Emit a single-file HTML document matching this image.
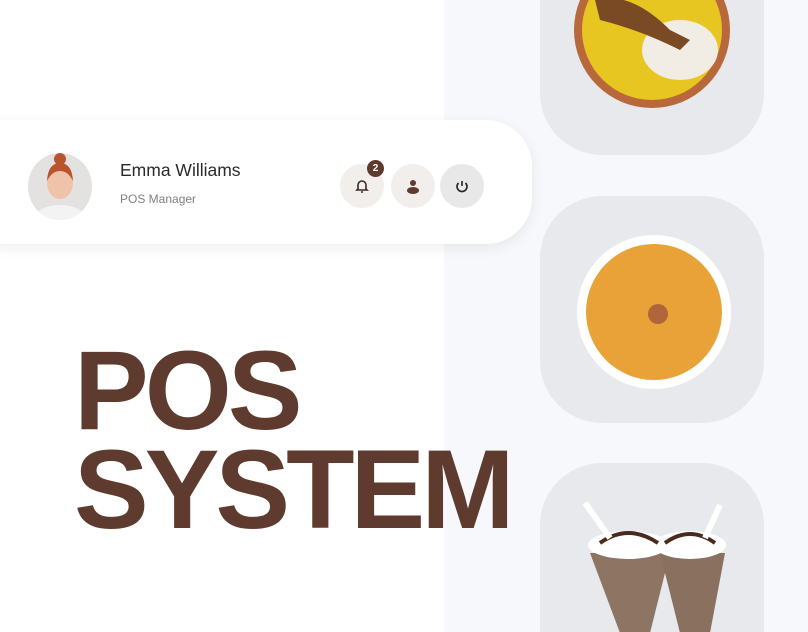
<!DOCTYPE html>
<html style="overflow:hidden;width:808px;height:632px"><head><meta charset="utf-8"><style>
*{margin:0;padding:0;box-sizing:border-box}
body{width:808px;height:632px;overflow:hidden;background:#fff;position:relative;font-family:"Liberation Sans",sans-serif}
.right{position:absolute;left:444px;top:0;width:364px;height:632px;background:#f7f8fb}
.tile{position:absolute;left:540px;width:224px;background:#e8e9ed;border-radius:62px;overflow:hidden}
.card{position:absolute;left:-40px;top:120px;width:572px;height:124px;background:#fff;border-radius:46px;box-shadow:0 4px 14px rgba(0,0,0,.07)}
.btn{position:absolute;width:44px;height:44px;border-radius:50%;background:#f1eeec;display:flex;align-items:center;justify-content:center}
.big{position:absolute;left:74px;color:#5e3b2e;font-weight:bold;font-size:112px;letter-spacing:-4px;line-height:1}
</style></head><body>
<div class="right"></div>
<div class="tile" style="top:-70px;height:225px">
 <svg width="224" height="225"><circle cx="112" cy="100" r="78" fill="#b8683a"/><circle cx="112" cy="100" r="70" fill="#e8c622"/><ellipse cx="140" cy="120" rx="38" ry="30" fill="#f1ede4"/><path d="M55 70 Q90 60 130 100 L150 110 L140 120 Q100 100 60 90Z" fill="#7a4a25"/></svg>
</div>
<div class="tile" style="top:196px;height:227px">
 <svg width="224" height="227"><circle cx="114" cy="116" r="77" fill="#fff"/><circle cx="114" cy="116" r="68" fill="#e9a237"/><circle cx="118" cy="118" r="10" fill="#b0653a"/></svg>
</div>
<div class="tile" style="top:463px;height:169px;border-bottom-left-radius:0;border-bottom-right-radius:0">
 <svg width="224" height="169"><path d="M50 90 L80 170 L110 170 L130 90Z" fill="#8e7563"/><path d="M120 90 L140 170 L170 170 L185 90Z" fill="#8a705f"/><ellipse cx="88" cy="82" rx="40" ry="14" fill="#fff"/><ellipse cx="150" cy="82" rx="36" ry="14" fill="#fff"/><path d="M60 80 Q88 60 118 80 M125 80 Q150 62 175 80" stroke="#4a2a1c" stroke-width="4" fill="none"/><line x1="45" y1="40" x2="70" y2="75" stroke="#fff" stroke-width="6"/><line x1="180" y1="42" x2="165" y2="75" stroke="#fff" stroke-width="6"/></svg>
</div>
<div class="card"></div>
<div style="position:absolute;left:28px;top:153px;width:64px;height:67px;border-radius:50%;background:#e3e2e1;overflow:hidden">
 <svg width="64" height="67"><ellipse cx="32" cy="66" rx="26" ry="14" fill="#f3f3f3"/><ellipse cx="32" cy="30" rx="13" ry="16" fill="#eec3a9"/><path d="M19 28 Q20 10 32 10 Q44 10 45 28 Q40 18 32 18 Q24 18 19 28Z" fill="#b8552e"/><circle cx="32" cy="6" r="6" fill="#b8552e"/></svg>
</div>
<div style="position:absolute;left:120px;top:160px;font-size:17.5px;color:#2a2a2a">Emma Williams</div>
<div style="position:absolute;left:120px;top:192px;font-size:12px;color:#808080">POS Manager</div>
<div class="btn" style="left:340px;top:164px"><svg width="16" height="16" viewBox="0 0 16 16"><path d="M4 11V7a4 4 0 0 1 8 0v4l1 1H3Z M7 14h2" stroke="#3b2a22" stroke-width="1.6" fill="none"/></svg></div>
<div style="position:absolute;left:367px;top:160px;width:17px;height:17px;border-radius:50%;background:#5e3b2e;color:#fff;font-size:10px;font-weight:bold;text-align:center;line-height:17px">2</div>
<div class="btn" style="left:391px;top:164px"><svg width="16" height="16"><circle cx="8" cy="5" r="3" fill="#5e3b2e"/><ellipse cx="8" cy="12.5" rx="6" ry="3.5" fill="#5e3b2e"/></svg></div>
<div class="btn" style="left:440px;top:164px;background:#e8e8e8"><svg width="16" height="16"><path d="M4.5 5a5 5 0 1 0 7 0" stroke="#222" stroke-width="1.6" fill="none"/><line x1="8" y1="3" x2="8" y2="8" stroke="#222" stroke-width="1.6"/></svg></div>
<div class="big" style="top:335px">POS</div>
<div class="big" style="top:434px">SYSTEM</div>
</body></html>
